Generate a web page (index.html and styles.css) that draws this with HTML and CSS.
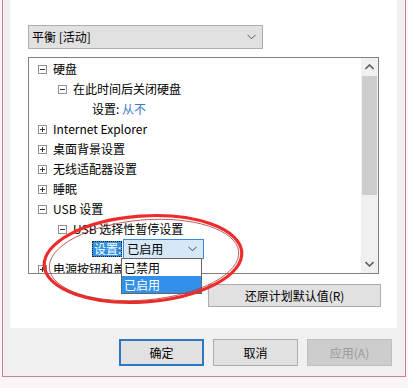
FILE: index.html
```html
<!DOCTYPE html>
<html>
<head>
<meta charset="utf-8">
<link rel="stylesheet" href="styles.css">
</head>
<body>
<div class="window">
  <div class="panel">
    <div class="select">
      <span>平衡 [活动]</span>
      <svg class="chev" width="9" height="6" viewBox="0 0 9 6"><path d="M0.5 0.8 L4.5 4.8 L8.5 0.8" fill="none" stroke="#555" stroke-width="1"/></svg>
    </div>
    <div class="tree">
      <div class="rows">
        <div class="row l0"><svg class="exp" width="9" height="9" viewBox="0 0 9 9"><rect x="0.5" y="0.5" width="8" height="8" fill="#fff" stroke="#919191"/><path d="M2 4.5h5" stroke="#333"/></svg><span class="t">硬盘</span></div>
        <div class="row l1"><svg class="exp" width="9" height="9" viewBox="0 0 9 9"><rect x="0.5" y="0.5" width="8" height="8" fill="#fff" stroke="#919191"/><path d="M2 4.5h5" stroke="#333"/></svg><span class="t">在此时间后关闭硬盘</span></div>
        <div class="row l2"><span class="t">设置: <span class="val">从不</span></span></div>
        <div class="row l0"><svg class="exp" width="9" height="9" viewBox="0 0 9 9"><rect x="0.5" y="0.5" width="8" height="8" fill="#fff" stroke="#919191"/><path d="M2 4.5h5M4.5 2v5" stroke="#333"/></svg><span class="t">Internet Explorer</span></div>
        <div class="row l0"><svg class="exp" width="9" height="9" viewBox="0 0 9 9"><rect x="0.5" y="0.5" width="8" height="8" fill="#fff" stroke="#919191"/><path d="M2 4.5h5M4.5 2v5" stroke="#333"/></svg><span class="t">桌面背景设置</span></div>
        <div class="row l0"><svg class="exp" width="9" height="9" viewBox="0 0 9 9"><rect x="0.5" y="0.5" width="8" height="8" fill="#fff" stroke="#919191"/><path d="M2 4.5h5M4.5 2v5" stroke="#333"/></svg><span class="t">无线适配器设置</span></div>
        <div class="row l0"><svg class="exp" width="9" height="9" viewBox="0 0 9 9"><rect x="0.5" y="0.5" width="8" height="8" fill="#fff" stroke="#919191"/><path d="M2 4.5h5M4.5 2v5" stroke="#333"/></svg><span class="t">睡眠</span></div>
        <div class="row l0"><svg class="exp" width="9" height="9" viewBox="0 0 9 9"><rect x="0.5" y="0.5" width="8" height="8" fill="#fff" stroke="#919191"/><path d="M2 4.5h5" stroke="#333"/></svg><span class="t">USB 设置</span></div>
        <div class="row l1"><svg class="exp" width="9" height="9" viewBox="0 0 9 9"><rect x="0.5" y="0.5" width="8" height="8" fill="#fff" stroke="#919191"/><path d="M2 4.5h5" stroke="#333"/></svg><span class="t">USB 选择性暂停设置</span></div>
        <div class="row l2 editrow"><span class="hl">设置:</span><div class="combo"><span>已启用</span><svg class="chev" width="9" height="6" viewBox="0 0 9 6"><path d="M0.5 0.8 L4.5 4.8 L8.5 0.8" fill="none" stroke="#444" stroke-width="1"/></svg></div></div>
        <div class="row l0"><svg class="exp" width="9" height="9" viewBox="0 0 9 9"><rect x="0.5" y="0.5" width="8" height="8" fill="#fff" stroke="#919191"/><path d="M2 4.5h5M4.5 2v5" stroke="#333"/></svg><span class="t">电源按钮和盖子</span></div>
      </div>
      <div class="scroll">
        <div class="sbtn"><svg width="9" height="6" viewBox="0 0 9 6"><path d="M0.5 5 L4.5 1 L8.5 5" fill="none" stroke="#606060" stroke-width="1.6"/></svg></div>
        <div class="thumb"></div>
        <div class="track"></div>
        <div class="sbtn"><svg width="9" height="6" viewBox="0 0 9 6"><path d="M0.5 1 L4.5 5 L8.5 1" fill="none" stroke="#606060" stroke-width="1.6"/></svg></div>
      </div>
      <div class="list">
        <div class="opt">已禁用</div>
        <div class="opt sel">已启用</div>
      </div>
    </div>
    <div class="restore-row"><button class="btn restore">还原计划默认值(R)</button></div>
  </div>
  <div class="footer">
    <button class="btn ok">确定</button>
    <button class="btn">取消</button>
    <button class="btn disabled">应用(A)</button>
  </div>
</div>
<svg class="mark" width="220" height="110" viewBox="0 0 220 110">
  <ellipse cx="103" cy="51" rx="99" ry="43" transform="rotate(-4 103 51)" fill="none" stroke="#ee2b2b" stroke-width="3.2"/>
  <ellipse cx="104" cy="52" rx="95" ry="40" transform="rotate(-5 104 52)" fill="none" stroke="#b33a3a" stroke-width="0.8"/>
</svg>
</body>
</html>
```
FILE: styles.css
```css
html, body {
  margin: 0;
  padding: 0;
}
body {
  width: 408px;
  height: 388px;
  background: #fbf5f8;
  font-family: "Noto Sans CJK SC", "Noto Sans", sans-serif;
  font-size: 12px;
  color: #000;
  position: relative;
  overflow: hidden;
}
.window {
  margin-left: 2px;
  width: 404px;
  height: 377px;
  background: #f0f0f0;
  border-left: 1px solid #c77f9d;
  border-right: 1px solid #c77f9d;
  border-bottom: 1px solid #c77f9d;
  padding: 0 8px 0 7px;
  box-sizing: border-box;
  display: flex;
  flex-direction: column;
}
.panel {
  background: #fff;
  height: 328px;
  padding: 25px 0 0 18px;
  box-sizing: border-box;
}
.select {
  width: 235px;
  height: 24px;
  box-sizing: border-box;
  background: #e1e1e1;
  border: 1px solid #adadad;
  display: flex;
  align-items: center;
  justify-content: space-between;
  padding: 0 6px 0 3px;
  line-height: 1;
}
.tree {
  position: relative;
  margin-top: 8px;
  width: 351px;
  height: 217px;
  box-sizing: border-box;
  border: 1px solid #828282;
  display: flex;
}
.rows {
  flex: 1;
  overflow: hidden;
  padding-top: 1px;
}
.row {
  height: 20px;
  display: flex;
  align-items: center;
  white-space: nowrap;
  line-height: 1;
}
.row.l0 { padding-left: 9px; }
.row.l1 { padding-left: 29px; }
.row.l2 { padding-left: 63px; }
.exp {
  flex: none;
  margin-right: 6px;
}
.val { color: #3a7bc8; }
.hl {
  background: #3390e0;
  color: #fff;
  outline: 1px dotted #222;
  outline-offset: -1px;
  padding: 2px 1px 2px 2px;
}
.combo {
  width: 81px;
  height: 20px;
  box-sizing: border-box;
  background: #d6e8f8;
  border: 1px solid #3c8ad6;
  display: flex;
  align-items: center;
  justify-content: space-between;
  padding: 0 6px 0 3px;
  margin-left: 1px;
}
.scroll {
  width: 17px;
  background: #f0f0f0;
  display: flex;
  flex-direction: column;
}
.sbtn {
  height: 18px;
  display: flex;
  align-items: center;
  justify-content: center;
}
.thumb {
  height: 119px;
  background: #cdcdcd;
  margin: 0 1px;
}
.track { flex: 1; }
.list {
  position: absolute;
  left: 92px;
  top: 200px;
  width: 81px;
  box-sizing: border-box;
  border: 1px solid #646464;
  background: #fff;
}
.opt {
  height: 17px;
  line-height: 17px;
  padding-left: 2px;
}
.opt.sel {
  background: #3390e8;
  color: #fff;
}
.restore-row {
  margin-top: 10px;
  padding-left: 180px;
}
.btn {
  font-family: "Noto Sans CJK SC", "Noto Sans", sans-serif;
  font-size: 12px;
  color: #000;
  background: #e1e1e1;
  border: 1px solid #adadad;
  width: 85px;
  height: 27px;
  padding: 0;
  margin: 0;
}
.btn.restore {
  width: 173px;
  height: 23px;
}
.footer {
  display: flex;
  justify-content: flex-end;
  gap: 9px;
  padding: 11px 5px 0 0;
}
.btn.ok {
  border: 2px solid #2a79c7;
}
.btn.disabled {
  background: #cccccc;
  border-color: #bfbfbf;
  color: #9a9a9a;
}
.mark {
  position: absolute;
  left: 40px;
  top: 208px;
}
```
